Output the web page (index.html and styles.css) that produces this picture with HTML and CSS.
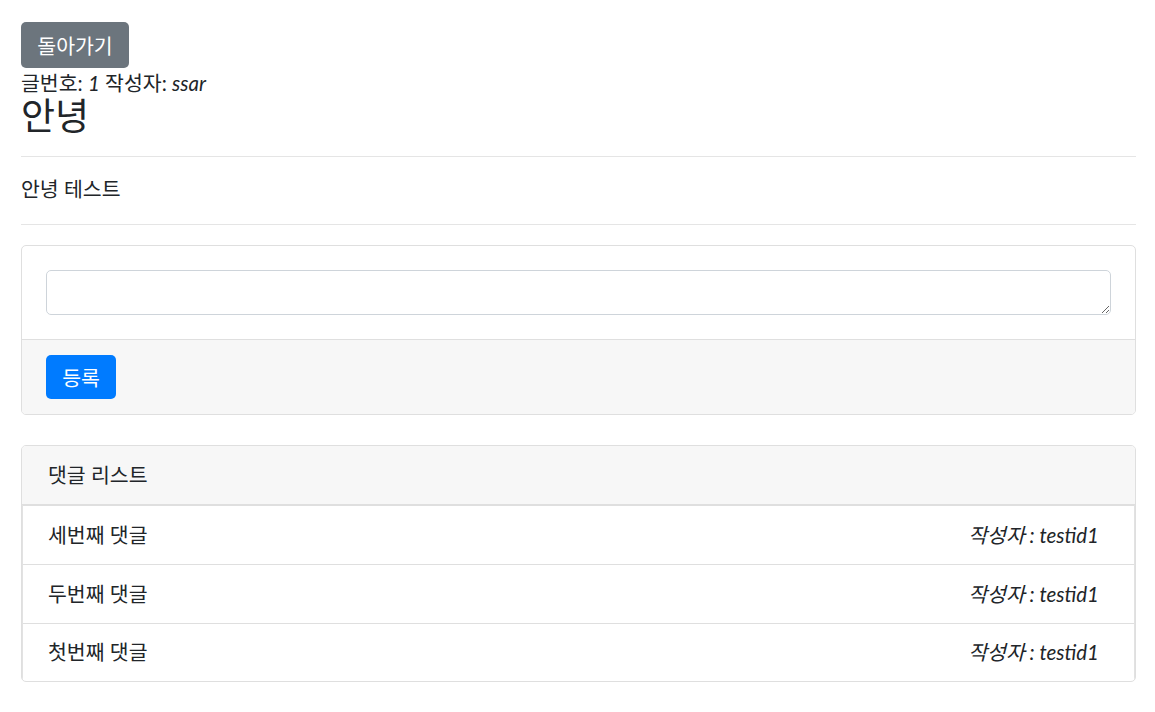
FILE: index.html
```html
<!DOCTYPE html>
<html lang="ko">
<head>
<meta charset="utf-8">
<title>글 상세</title>
<link rel="stylesheet" href="styles.css">
</head>
<body>
<div class="page">
  <button class="btn btn-secondary">돌아가기</button>
  <div class="meta">글번호: <i>1</i> 작성자: <i>ssar</i></div>
  <h3 class="title">안녕</h3>
  <hr class="rule rule-top">
  <div class="content">안녕 테스트</div>
  <hr class="rule rule-bottom">

  <div class="card reply-form">
    <div class="card-body">
      <textarea class="form-control"></textarea>
    </div>
    <div class="card-footer">
      <button class="btn btn-primary">등록</button>
    </div>
  </div>

  <div class="card reply-list">
    <div class="card-header">댓글 리스트</div>
    <ul class="list-group">
      <li class="list-item"><span>세번째 댓글</span><span class="author"><i>작성자 : testid1</i></span></li>
      <li class="list-item"><span>두번째 댓글</span><span class="author"><i>작성자 : testid1</i></span></li>
      <li class="list-item"><span>첫번째 댓글</span><span class="author"><i>작성자 : testid1</i></span></li>
    </ul>
  </div>
</div>
</body>
</html>
```

FILE: styles.css
```css
* { box-sizing: border-box; }
body {
  margin: 0;
  font-family: "Lato", "Noto Sans CJK KR", sans-serif;
  font-size: 20.5px;
  line-height: 27px;
  color: #212529;
  background: #fff;
}
.page {
  padding: 22px 19px 30px 21px;
}
.btn {
  display: inline-flex;
  align-items: center;
  justify-content: center;
  border: 0;
  border-radius: 5px;
  font-family: inherit;
  font-size: 20.5px;
  color: #fff;
  padding: 0;
  cursor: pointer;
}
.btn-secondary {
  background: #6c757d;
  width: 108px;
  height: 46px;
}
.btn-primary {
  background: #007bff;
  width: 70px;
  height: 44px;
}
.meta {
  line-height: 28px;
  margin-top: 1px;
}
.title {
  margin: 0;
  font-size: 37px;
  font-weight: 400;
  line-height: 38px;
}
.rule {
  border: 0;
  border-top: 1px solid #e5e5e5;
  margin: 0;
}
.rule-top { margin-top: 21px; }
.content {
  padding: 18px 0 21px;
  line-height: 28px;
}
.rule-bottom { margin-bottom: 20px; }
.card {
  border: 1px solid #dfdfdf;
  border-radius: 5px;
  overflow: hidden;
}
.card-body {
  padding: 24px;
}
.form-control {
  display: block;
  width: 100%;
  height: 45px;
  border: 1px solid #ced4da;
  border-radius: 5px;
  font-family: inherit;
  font-size: 18px;
  padding: 6px 12px;
  resize: vertical;
}
.card-footer {
  background: #f7f7f7;
  border-top: 1px solid #dfdfdf;
  padding: 15px 24px;
}
.reply-list {
  margin-top: 30px;
}
.card-header {
  background: #f7f7f7;
  height: 59px;
  padding: 0 26px;
  display: flex;
  align-items: center;
  border-bottom: 1px solid #dfdfdf;
}
.list-group {
  list-style: none;
  margin: 0;
  padding: 0;
  border-left: 1px solid #e2e2e2;
  border-right: 1px solid #e2e2e2;
}
.list-item {
  display: flex;
  justify-content: space-between;
  align-items: center;
  height: 59px;
  padding: 0 35px 0 25px;
  border-top: 1px solid #dfdfdf;
}
.list-item:last-child { height: 58px; }
.author i { font-style: italic; }
```
